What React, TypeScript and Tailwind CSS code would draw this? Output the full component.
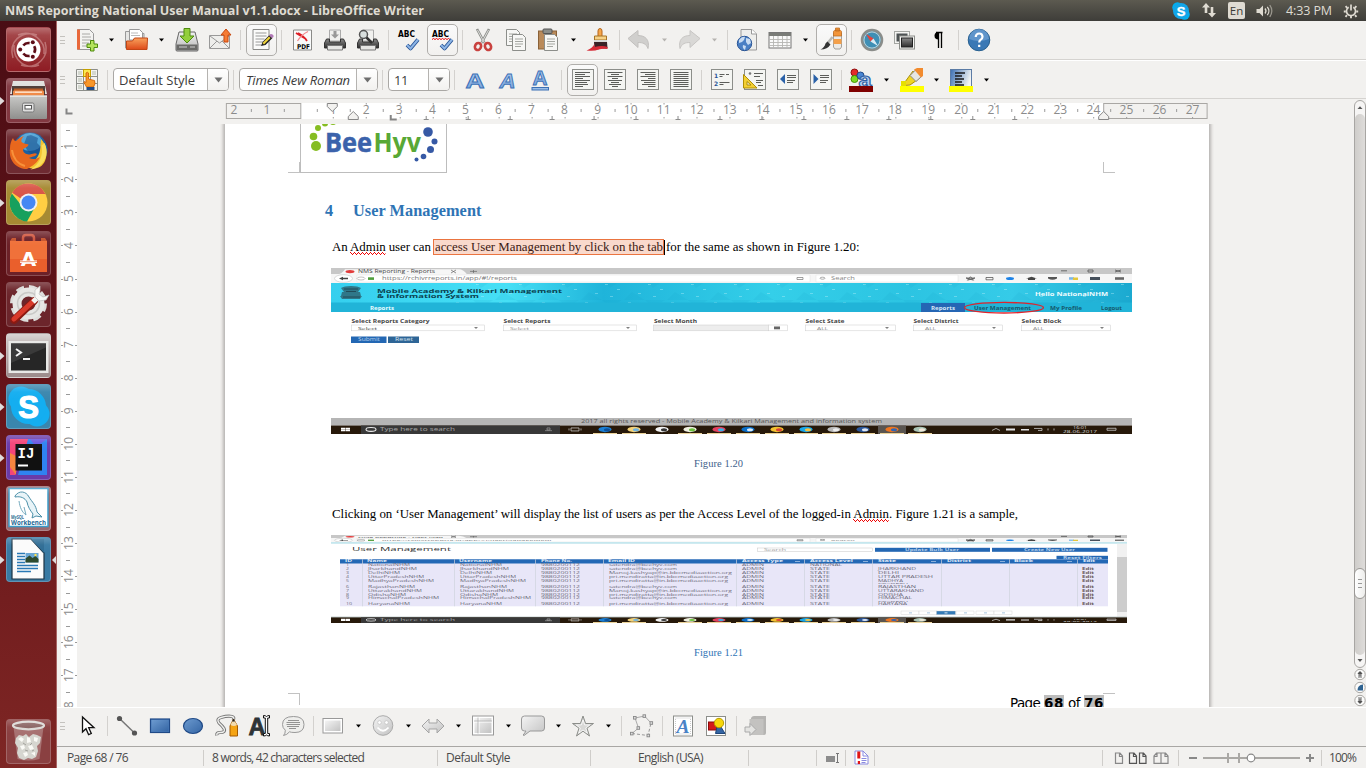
import { useLayoutEffect, useRef } from "react";
import type { ReactNode } from "react";

const UI = "font-['Open_Sans','Noto_Sans',sans-serif]";
const SERIF = "font-['Liberation_Serif',serif]";

/* Text whose tracking is adjusted so that it occupies a given width. */
function Fit({ w, className = "", children }: { w: number; className?: string; children: ReactNode }) {
  const ref = useRef<HTMLSpanElement>(null);
  useLayoutEffect(() => {
    const el = ref.current;
    if (!el) return;
    el.style.letterSpacing = "0px";
    const n = (el.textContent || "").length;
    const natural = el.getBoundingClientRect().width;
    el.style.letterSpacing = (w - natural) / n + "px";
  }, [w]);
  return (
    <span ref={ref} className={"inline-block whitespace-pre " + className}>
      {children}
    </span>
  );
}

function I({ m = "", children }: { m?: string; children: ReactNode }) {
  return (
    <svg className={"h-6 w-6 shrink-0 overflow-visible " + m} viewBox="0 0 24 24" fill="none">
      {children}
    </svg>
  );
}
const Sep = ({ m }: { m: string }) => <div className={"h-5 w-px shrink-0 bg-[#d3d1ce] " + m} />;
const Grip = () => (
  <div className="ml-[3px] flex w-[5px] shrink-0 flex-col gap-[2.5px]">
    <div className="h-px bg-[#c4c2be]" />
    <div className="h-px bg-[#c4c2be]" />
    <div className="h-px bg-[#c4c2be]" />
  </div>
);
const Arrow = ({ m, off }: { m: string; off?: boolean }) => (
  <svg className={"h-[4px] w-[7px] shrink-0 " + m} viewBox="0 0 7 4">
    <path d="M1 0.5h5L3.5 3.5z" fill={off ? "#b5b3b0" : "#000"} />
  </svg>
);
const Frame = ({ m, children }: { m: string; children: ReactNode }) => (
  <div
    className={
      "flex h-8 w-[31px] shrink-0 items-center justify-center rounded-[5px] border border-[#b0aeab] bg-gradient-to-b from-[#fafafa] to-[#f2f1ef] " +
      m
    }
  >
    {children}
  </div>
);

function Defs() {
  return (
    <svg className="absolute h-0 w-0">
      <defs>
        <linearGradient id="or" x1="0" y1="0" x2="0" y2="1">
          <stop offset="0" stopColor="#f9a25c" />
          <stop offset="1" stopColor="#dd4a1a" />
        </linearGradient>
        <linearGradient id="gr" x1="0" y1="0" x2="0" y2="1">
          <stop offset="0" stopColor="#f2f2f2" />
          <stop offset="1" stopColor="#b4b4b4" />
        </linearGradient>
        <linearGradient id="cab" x1="0" y1="0" x2="0" y2="1">
          <stop offset="0" stopColor="#c9c9c7" />
          <stop offset="1" stopColor="#8f8f8d" />
        </linearGradient>
        <linearGradient id="dk" x1="0" y1="0" x2="0" y2="1">
          <stop offset="0" stopColor="#8a8a8a" />
          <stop offset="1" stopColor="#2c2c2c" />
        </linearGradient>
        <linearGradient id="bl" x1="0" y1="0" x2="0" y2="1">
          <stop offset="0" stopColor="#b5cfee" />
          <stop offset="1" stopColor="#74a1db" />
        </linearGradient>
        <linearGradient id="db" x1="0" y1="0" x2="1" y2="1">
          <stop offset="0" stopColor="#6d9bd0" />
          <stop offset="1" stopColor="#3465a4" />
        </linearGradient>
        <linearGradient id="bw" x1="0" y1="0" x2="1" y2="0.3">
          <stop offset="0" stopColor="#3b6fb3" />
          <stop offset="1" stopColor="#f2f4f2" />
        </linearGradient>
        <linearGradient id="lg" x1="0" y1="0" x2="1" y2="1">
          <stop offset="0" stopColor="#f4f4f4" />
          <stop offset="1" stopColor="#c2c2c2" />
        </linearGradient>
        <linearGradient id="ban" x1="0" y1="0" x2="1" y2="0">
          <stop offset="0" stopColor="#35cfee" />
          <stop offset="0.22" stopColor="#46dff5" />
          <stop offset="0.34" stopColor="#1fb4da" />
          <stop offset="0.55" stopColor="#34cfe9" />
          <stop offset="0.72" stopColor="#2cc4e2" />
          <stop offset="0.85" stopColor="#35cbe8" />
          <stop offset="1" stopColor="#1ba9d0" />
        </linearGradient>
        <pattern id="dots" width="43" height="20" patternUnits="userSpaceOnUse">
          <rect x="3" y="4" width="3" height="0.8" fill="#c6f5fb" opacity="0.5" />
          <rect x="15" y="9" width="3" height="0.8" fill="#c6f5fb" opacity="0.5" />
          <rect x="26" y="2" width="3" height="0.8" fill="#c6f5fb" opacity="0.5" />
          <rect x="36" y="13" width="3" height="0.8" fill="#c6f5fb" opacity="0.45" />
          <rect x="8" y="16" width="3" height="0.8" fill="#c6f5fb" opacity="0.45" />
          <path d="M0 0L20 0 8 8zM30 12l13 8H22z" fill="#0f9cc8" opacity="0.12" />
        </pattern>
        <pattern id="zig" width="4" height="3" patternUnits="userSpaceOnUse">
          <path d="M0 0.500h1M1 1.500h1M2 2.500h1M3 1.500h1" stroke="#f00000" />
        </pattern>
        <linearGradient id="gloss" x1="0" y1="0" x2="0" y2="1">
          <stop offset="0" stopColor="#fff" stopOpacity="0.350" />
          <stop offset="0.5" stopColor="#fff" stopOpacity="0.05" />
          <stop offset="1" stopColor="#fff" stopOpacity="0" />
        </linearGradient>
      </defs>
    </svg>
  );
}

/* ---------- top panel ---------- */
function Panel() {
  return (
    <header className={"flex h-[21px] w-full shrink-0 items-center bg-gradient-to-b from-[#5c5a50] to-[#3e3d39] text-[#dfdbd2] " + UI}>
      <Fit w={419} className="ml-[5px] text-[12.5px] leading-5 font-bold">
        NMS Reporting National User Manual v1.1.docx - LibreOffice Writer
      </Fit>
      <svg className="ml-auto h-[18px] w-[18px]" viewBox="0 0 18 18">
        <circle cx="5.5" cy="5.5" r="5.2" fill="#00aff0" />
        <circle cx="12.5" cy="12.5" r="5.2" fill="#00aff0" />
        <circle cx="9" cy="9" r="8" fill="#12a5e8" />
        <text x="9" y="13.6" fontSize="13" fontWeight="700" fontFamily="Liberation Sans" fill="#fff" stroke="#fff" strokeWidth="0.400" textAnchor="middle">S</text>
      </svg>
      <svg className="ml-[11px] h-[15px] w-[16px]" viewBox="0 0 16 15" fill="#dfdbd2">
        <path d="M5 0l4 4.500H6.300V10H3.700V4.500H1zM11 14.500l-4-4.500h2.700V4h2.600v6H15z" />
      </svg>
      <span className="ml-[11px] flex h-[17px] w-[17px] items-center justify-center rounded-[2px] bg-[#dfdbd2] text-[11.5px] leading-4 text-[#3c3b37]">En</span>
      <svg className="ml-[11px] h-[14px] w-[18px]" viewBox="0 0 18 14">
        <path d="M0.500 5h3l3.500-3.500v11L3.500 9h-3z" fill="#dfdbd2" />
        <path d="M9 4.500a4 4 0 010 5M11.300 2.800a6.500 6.500 0 010 8.400" stroke="#dfdbd2" strokeWidth="1.300" fill="none" />
        <path d="M13.700 1.200a9 9 0 010 11.600" stroke="#99968d" strokeWidth="1.300" fill="none" />
      </svg>
      <Fit w={46} className="ml-[12px] text-[12.5px] leading-5">4:33 PM</Fit>
      <svg className="mr-[7px] ml-[11px] h-[16px] w-[16px]" viewBox="0 0 16 16">
        <path d="M10.300 4.200a4.500 4.500 0 11-4.600 0" fill="none" stroke="#dfdbd2" strokeWidth="1.600" />
        <path d="M8 13v2.300M0.800 8.500h2M13.200 8.500h2M2.600 3.200l1.600 1.600M12 12.200l1.500 1.600M2.500 13.800L4 12.200M11.800 4.800l1.600-1.600" stroke="#dfdbd2" strokeWidth="1.900" />
        <path d="M8 1.500v6" stroke="#dfdbd2" strokeWidth="1.700" />
      </svg>
    </header>
  );
}

/* ---------- launcher ---------- */
function Tile({ bg, children, left, right, m = "mt-[6px]" }: { bg: string; children: ReactNode; left?: boolean; right?: boolean; m?: string }) {
  return (
    <div className={"flex h-[45px] w-full shrink-0 items-center " + m}>
      <svg className="h-[10px] w-[6px]" viewBox="0 0 6 10">
        {left && <path d="M0 1l4.500 4L0 9z" fill="#e0dcdc" />}
      </svg>
      <div className={"h-[45px] w-[45px] overflow-hidden rounded-[4px] border border-white/20 " + bg}>
        <svg className="h-[43px] w-[43px]" viewBox="1 1 43 43">
          {children}
          <rect x="1" y="1" width="43" height="14" fill="url(#gloss)" opacity="0.6" />
        </svg>
      </div>
      <svg className="h-[10px] w-[5px]" viewBox="0 0 5 10">
        {right && <path d="M5 1L1 5l4 4z" fill="#e0dcdc" />}
      </svg>
    </div>
  );
}

function Launcher() {
  return (
    <aside className="flex w-[57px] shrink-0 flex-col border-r border-[#a76463] bg-gradient-to-b from-[#4a0d14] via-[#661419] to-[#7e2624]">
      <Tile bg="bg-gradient-to-b from-[#a5474a] to-[#8e1c24]">
        <path d="M7 31C2 15 15 3 31 8M39 15c5 15-8 28-24 23M12 8c14-6 28 6 26 19M33 38C20 43 7 34 8 18" stroke="#d49a9a" strokeWidth="1.500" fill="none" opacity="0.6" />
        <circle cx="22.500" cy="22.500" r="12" fill="#fff" />
        <g fill="none" stroke="#5e0d17" strokeWidth="2.600">
          <path d="M17.300 18.500a6.500 6.500 0 016.300-2.400" />
          <path d="M17.300 26.500a6.500 6.500 0 006.300 2.400" />
          <path d="M28.200 19.200a6.500 6.500 0 010 6.600" />
        </g>
        <circle cx="14.200" cy="22.500" r="2" fill="#5e0d17" />
        <circle cx="26.800" cy="15.200" r="2" fill="#5e0d17" />
        <circle cx="26.800" cy="29.800" r="2" fill="#5e0d17" />
      </Tile>
      <Tile left bg="bg-[#823841]">
        <path d="M7 3h31l3 13H4z" fill="#dededc" />
        <rect x="6" y="8" width="33" height="11" fill="#4b3a35" />
        <rect x="8" y="10.500" width="29" height="3" fill="#b85a26" />
        <rect x="7" y="12.500" width="31" height="6" rx="1" fill="#f08b49" />
        <rect x="9" y="13.500" width="27" height="1.300" fill="#fff0df" />
        <path d="M4 17.500h37v22.500a1 1 0 01-1 1H5a1 1 0 01-1-1z" fill="url(#cab)" />
        <path d="M4 17.500h37v1.500H4z" fill="#e4e4e2" />
        <rect x="16.500" y="25" width="11.500" height="9" rx="1.500" fill="#ddd" stroke="#777" />
        <rect x="19" y="27.500" width="6.500" height="3.500" fill="#fff" stroke="#555" />
      </Tile>
      <Tile bg="bg-[#6e2a31]">
        <circle cx="24" cy="21" r="17.500" fill="#1c5f9f" />
        <ellipse cx="24" cy="13" rx="12" ry="9" fill="#5db4e4" opacity="0.800" />
        <path d="M21 7l4-1 7 3-1 5 4 4-3 7-6 1-5-5-3-6z" fill="#174a86" opacity="0.550" />
        <path d="M35 10c-1 9 0 14-5 20-3 4-8 6-13 5 7 7 18 6 22-3 3-7 2-16-4-22z" fill="#f4c430" />
        <path d="M38.500 14c4 8 2 17-4 22-3 2.500-6 4-10 4.500 9-5 13-14 11-24z" fill="#f9dd5c" />
        <path d="M4 19c0-4 1-7 3-10 .5 2 1.500 3 3 3 2-2 4-4 8-5-2 2-3 4-2.500 6 2 2 5 1.500 7 2.500 0 2.500-4 3-5.500 5 0 4 4 5 7 5 3-.5 5-2 7-.500-2 3-5 2.500-8 4 4 2 8 1 11-1-2 5-7 9-13 12C11 40 2 32 4 19z" fill="#e8671d" />
        <path d="M6 21c1 8 6 14 13 16" stroke="#f8913a" strokeWidth="2" fill="none" />
      </Tile>
      <Tile left bg="bg-[#a68a33]">
        <circle cx="22.500" cy="22.500" r="19" fill="#ffce43" />
        <path d="M22.500 3.500A19 19 0 0139.500 14H22.500L14 18 6.200 12.700A19 19 0 0122.500 3.500z" fill="#d95648" />
        <path d="M5.800 13.500A19 19 0 0021 41.400L29 27l-13-1z" fill="#17a05d" />
        <circle cx="22.500" cy="22.500" r="9" fill="#f1f1f1" />
        <circle cx="22.500" cy="22.500" r="7" fill="#4587f3" />
      </Tile>
      <Tile bg="bg-[#6c2128]">
        <path d="M17 12V7q0-3 3-3h5q3 0 3 3v5" fill="none" stroke="#d0543c" strokeWidth="2.500" />
        <path d="M4 10h37v31H4z" fill="#f0713a" />
        <path d="M4 10l2-3h4v3M35 7h4l2 3h-6z" fill="#c7542d" />
        <path d="M4 28h37v13H4z" fill="#ea5f2c" />
        <text x="22.500" y="34.500" fontSize="20" fontWeight="700" fontFamily="DejaVu Sans" fill="#fff" textAnchor="middle">A</text>
        <path d="M14 30.700h17" stroke="#fff" strokeWidth="2.600" />
        <path d="M14 30.700h17" stroke="#ea6531" strokeWidth="0.700" />
      </Tile>
      <Tile bg="bg-[#6c252b]">
        <circle cx="22.500" cy="21.500" r="15.500" fill="none" stroke="#dcdcda" strokeWidth="6" strokeDasharray="7.500 4.670" />
        <circle cx="22.500" cy="21.500" r="11.500" fill="none" stroke="#e6e6e4" strokeWidth="9" />
        <circle cx="22.500" cy="21.500" r="11" fill="none" stroke="#c9c9c7" strokeWidth="1.500" />
        <path d="M28 19L8 38" stroke="#8b1a12" strokeWidth="7.500" strokeLinecap="round" />
        <path d="M28 18.500L8 37" stroke="#d83a2b" strokeWidth="5" strokeLinecap="round" />
        <path d="M27 20l5-5" stroke="#f4f4f2" strokeWidth="5" />
        <path d="M34 4l-5 4v7l4 4 7-1 3-5-6 2-4-3 1-3z" fill="#f7f7f5" stroke="#bbb" strokeWidth="0.700" />
      </Tile>
      <Tile left bg="bg-gradient-to-b from-[#cfc9c8] to-[#9c8b8b]">
        <rect x="2.500" y="8" width="40" height="32" fill="#e8e8e6" />
        <rect x="5" y="10.500" width="35" height="27" fill="#262626" />
        <path d="M5 10.500h35v4L5 30z" fill="#3a3a3a" />
        <path d="M10 16l5 3.500-5 3.500M17 26h7" stroke="#f2f2f2" strokeWidth="2" fill="none" />
      </Tile>
      <Tile left bg="bg-[#3a86ad]">
        <circle cx="15" cy="15" r="12.500" fill="#14aef0" />
        <circle cx="31" cy="30" r="12.500" fill="#14aef0" />
        <circle cx="22.500" cy="22.500" r="17.500" fill="#14aef0" />
        <text x="22.500" y="33.500" fontSize="31" fontWeight="700" fontFamily="Liberation Sans" fill="#fff" stroke="#fff" strokeWidth="1.200" textAnchor="middle">S</text>
      </Tile>
      <Tile left bg="bg-[#6a3aa8]">
        <path d="M4 4h20L9 40H4z" fill="#f4457a" />
        <path d="M4 18l6 3v19l-6-8z" fill="#f5853f" />
        <path d="M22 4h19v36H12z" fill="#2f82f0" />
        <path d="M24 4h17L30 12z" fill="#6b57e0" />
        <rect x="9.500" y="9" width="26.500" height="26.500" fill="#111" />
        <text x="11.500" y="23" fontSize="14" fontWeight="700" fontFamily="Liberation Mono" fill="#fff">IJ</text>
        <path d="M12 30.500h10" stroke="#fff" strokeWidth="2" />
      </Tile>
      <Tile bg="bg-[#9a6a70]">
        <rect x="3" y="2.500" width="39" height="38" fill="#fff" stroke="#3b9cc9" strokeWidth="1.500" />
        <path d="M9 10c4-6 11-5 14 1 3 5 7 8 8 15l5 5-6-1-4 2 1-4c-3-4-5-7-6-12-2-4-6-6-12-5z" fill="#e8f4f8" stroke="#4b8fa8" strokeWidth="1" />
        <path d="M13 15c1 7 3 11 7 14l-2-8" fill="none" stroke="#73a9bd" strokeWidth="1" />
        <text x="5" y="32.500" fontSize="4.500" fontFamily="Open Sans" fontWeight="700" fill="#2f6f93" textLength="13" lengthAdjust="spacingAndGlyphs">MySQL</text>
        <text x="5" y="38.500" fontSize="7" fontFamily="Open Sans" fontWeight="700" fill="#1f6a96" textLength="35" lengthAdjust="spacingAndGlyphs">Workbench</text>
      </Tile>
      <Tile left right bg="bg-[#397aa3]">
        <path d="M6 2h19l13 14v26H6z" fill="#fbfbfb" stroke="#1c3344" strokeWidth="1.200" />
        <path d="M25 2h13v14z" fill="#2e6c94" />
        <path d="M11 16.500h8M11 19.500h8M11 22.500h8M11 25.500h8M11 28.500h21M11 31.500h21M11 34.500h14" stroke="#2a79b5" strokeWidth="1.400" />
        <rect x="19.500" y="16" width="13" height="9.500" fill="#69a6d4" />
        <path d="M19.500 25.500v-4l4-3 3 2.500 3-2 3 3v3.500z" fill="#2d4a2d" />
        <circle cx="29.500" cy="18" r="1.200" fill="#ffe14d" />
      </Tile>
      <Tile m="mt-auto mb-[4px]" bg="bg-[#8a4041]">
        <path d="M7.500 8l4 32q11 3 22 0l4-32z" fill="#c9aeac" opacity="0.450" />
        <path d="M10 19l3-3 4 1 3-2 3 3 4-3 4 1 4 2-1 6-3 3 1 5-2 6-4 2-4-1-4 2-5-2-2-5 1-5-3-5z" fill="#d6d6d0" />
        <path d="M12 20l3-2 3 2-2 3zM21 18l3 1 1 4-4 1zM28 18l4 1-1 4-3-1zM14 27l4-1 1 3-3 2zM22 27l4-1 2 4-4 1zM17 34l4-1 1 3-3 2zM25 34l4-1v4z" fill="#fafaf6" />
        <path d="M17 24l3 2M26 24l-2 2M19 31l3 1M28 31l-2 1" stroke="#a3a39d" />
        <ellipse cx="22.500" cy="6.500" rx="15.500" ry="3.800" fill="#8a6463" stroke="#dcd9d6" strokeWidth="2.200" />
      </Tile>
    </aside>
  );
}

/* ---------- toolbars ---------- */
const PageShape = ({ x = 0, y = 0 }: { x?: number; y?: number }) => (
  <g transform={`translate(${x} ${y})`}>
    <path d="M0.500 0.500h10l3 3v13h-13z" fill="#f7f7f5" stroke="#8c8e8a" />
    <path d="M3 5h8M3 7.500h8M3 10h8M3 12.500h6" stroke="#9b9d99" strokeWidth="0.900" />
  </g>
);
const Abc = ({ m = "", wavy }: { m?: string; wavy?: boolean }) => (
  <I m={m}>
    <text x="1" y="9" fontSize="8" fontWeight="700" fontFamily="DejaVu Sans" fill="#000" textLength="17" lengthAdjust="spacingAndGlyphs">ABC</text>
    {wavy && <path d="M1 11.500l1.500-1 1.500 1 1.500-1 1.500 1 1.500-1 1.500 1 1.500-1 1.500 1 1.500-1 1.500 1 1.500-1 1.500 1" stroke="#e00" strokeWidth="1" />}
    <path d="M10 17l3.500 3.500L21 11.500" stroke="#2a5596" strokeWidth="3.800" strokeLinejoin="round" />
    <path d="M10 17l3.500 3.500L21 11.500" stroke="#8db5e6" strokeWidth="2" />
  </I>
);

function StandardBar() {
  return (
    <div className="flex h-[39px] shrink-0 items-center border-b border-[#d5d3d0]">
      <Grip />
      <I m="ml-[10px]">
        <path d="M2.500 1.500h12l4 4v16h-16z" fill="#f3f3f1" stroke="#999" />
        <path d="M2 1.500h3v20H2z" fill="#e8683a" />
        <path d="M7 6h8M7 9h9M7 12h9M7 15h7M7 18h5" stroke="#a9a9a6" />
        <path d="M15.500 12.500h3.500v3.500h3.500v3.500H19V23h-3.500v-3.500H12V16h3.500z" fill="#b4e35c" stroke="#4e8a0e" />
      </I>
      <Arrow m="ml-[9px]" />
      <I m="ml-[9px]">
        <path d="M1.500 20V3.500h5l1.500 2h12V20z" fill="#e6e6e4" stroke="#999" />
        <path d="M5.500 1.500h10l3 3V12h-13z" fill="#fff" stroke="#999" />
        <path d="M7 5h7M7 7.500h9" stroke="#bbb" />
        <path d="M2.500 13h6l2-3h13L23 21.500H2.500z" fill="url(#or)" stroke="#c24616" />
      </I>
      <Arrow m="ml-[10px]" />
      <I m="ml-[10px]">
        <path d="M4 4h16l3 12v6q0 1-1 1H2q-1 0-1-1v-6z" fill="url(#gr)" stroke="#666" />
        <path d="M1.500 16.500h21V22h-21z" fill="#6a6a68" />
        <path d="M4 19h8M15 19h5" stroke="#ccc" />
        <path d="M9 .500h6V8h4l-7 7-7-7h4z" fill="#93cf3c" stroke="#4e8a0e" />
      </I>
      <I m="ml-[9px]">
        <path d="M1.500 7.500h20v13h-20z" fill="#eeeeec" stroke="#999" />
        <path d="M2 8l9.500 7L21 8M2 20l7-7M21 20l-7-7" stroke="#999" />
        <path d="M16 14V7h-3l5-6 5 6h-3v7z" fill="#f57b34" stroke="#c9480f" />
      </I>
      <Sep m="ml-2" />
      <Frame m="ml-[5px]">
        <I>
          <path d="M3 1.500h16v20H3z" fill="#fbfbfa" stroke="#8a8a88" />
          <path d="M5.500 5h11M5.500 8h11M5.500 11h9M5.500 14h8M5.500 17h6" stroke="#999" />
          <path d="M11 18l1.500-4 7-7 3 3-7 7z" fill="#222" />
          <path d="M12.500 15l6.500-6.500 1.500 1.500-6.500 6.500z" fill="#f1d53c" />
          <path d="M19 7.500l1.500-1.500q2-.5 3 1.500v1.500L22 10z" fill="#b27ab8" />
        </I>
      </Frame>
      <Sep m="ml-1" />
      <I m="ml-2">
        <path d="M3.500 2h18v20h-18z" fill="#fafafa" stroke="#8a8a88" />
        <path d="M6 5l10 6M8 5q6 3 9 8" stroke="#dd1f26" strokeWidth="1.800" />
        <path d="M18 3.500Q11 7 7.500 13" stroke="#f0888c" strokeWidth="1.200" />
        <text x="7" y="20.500" fontSize="6.500" fontFamily="DejaVu Sans" fontWeight="700" fill="#000" textLength="13" lengthAdjust="spacingAndGlyphs">PDF</text>
      </I>
      <I m="ml-[9px]">
        <path d="M6.500 2h11v11h-11z" fill="#f1f1ef" stroke="#aaa" />
        <path d="M10.500 3h3v3.500H16l-4 4-4-4h2.500z" fill="#999" />
        <path d="M3.500 11h3v3h11v-3h3l2 4v5h-21v-5z" fill="url(#dk)" stroke="#333" />
        <path d="M4.500 17.500h15v4.500h-15z" fill="#e6e6e4" stroke="#777" />
      </I>
      <I m="ml-[9px]">
        <path d="M6.500 2h11v11h-11z" fill="#f1f1ef" stroke="#aaa" />
        <path d="M3.500 11h3v3h11v-3h3l2 4v5h-21v-5z" fill="url(#dk)" stroke="#333" />
        <path d="M4.500 17.500h15v4.500h-15z" fill="#e6e6e4" stroke="#777" />
        <circle cx="7.500" cy="6.500" r="4" fill="#d8dedd" stroke="#555" strokeWidth="1.500" />
        <path d="M10.500 9.500l5.500 5.500" stroke="#333" strokeWidth="2.500" />
      </I>
      <Sep m="ml-2" />
      <Abc m="ml-2" />
      <Frame m="ml-[6px]">
        <Abc wavy />
      </Frame>
      <Sep m="ml-1" />
      <I m="ml-2">
        <path d="M6 1l7.500 14M18 1l-7.500 14" stroke="#8c8e8a" strokeWidth="2.600" />
        <path d="M6.500 2l7 13M17.500 2l-7 13" stroke="#dcdcda" />
        <ellipse cx="7" cy="18.500" rx="3" ry="3.600" stroke="#c9423f" strokeWidth="2.600" transform="rotate(25 7 18.500)" />
        <ellipse cx="17" cy="18.500" rx="3" ry="3.600" stroke="#c9423f" strokeWidth="2.600" transform="rotate(-25 17 18.500)" />
      </I>
      <I m="ml-[9px]">
        <PageShape x={2} y={1} />
        <PageShape x={8} y={6} />
      </I>
      <I m="ml-2">
        <rect x="2.500" y="3" width="18" height="18" fill="#b98a5a" stroke="#8a6238" />
        <rect x="7" y="1" width="9" height="4.500" rx="1" fill="#8c8e8a" stroke="#555" />
        <PageShape x={8} y={6} />
      </I>
      <Arrow m="ml-[10px]" />
      <I m="ml-[11px]">
        <path d="M10 8V3q0-2.500 2-2.500T14 3v5" fill="#f5a64a" stroke="#b5651a" />
        <path d="M6.500 8h12v4h-12z" fill="#f6d288" stroke="#a67426" />
        <path d="M6 12h13v2.500H6z" fill="#d8d8d6" />
        <path d="M6 14h13l.5 6q-2 1-6 0-3 2-7 1.500z" fill="#3a2226" />
        <path d="M6.500 16q-2 4-8 6.500 8 1 12-1 4-1 9-.5v-2q-5-2-13 0z" fill="#d62a36" />
      </I>
      <Sep m="ml-[7px]" />
      <I m="ml-[7px]">
        <path d="M1 10.500l10-8v5c7 0 12 4 10 13-2-5-5-6-10-6v5z" fill="#d0cfcd" stroke="#c2c0be" />
      </I>
      <Arrow m="ml-[10px]" off />
      <I m="ml-[9px]">
        <path d="M23 10.500l-10-8v5c-7 0-12 4-10 13 2-5 5-6 10-6v5z" fill="#d9d8d6" stroke="#c8c6c4" />
      </I>
      <Arrow m="ml-[10px]" off />
      <Sep m="ml-[9px]" />
      <I m="ml-2">
        <path d="M5 1.500h11l4.500 4.500v16H5z" fill="#eeeeec" stroke="#999" />
        <path d="M15.500 1.500V6H20.500" fill="#fff" stroke="#999" />
        <circle cx="8.500" cy="15.500" r="7.200" fill="#4a7fc4" stroke="#2a5596" />
        <path d="M3 12q3-4 6-3l-1 3-2 2-3 1zM10 10l4 1 1 4-3 2-2-3zM7 17l3 1-1 4q-3-2-2-5z" fill="#c9dcf2" />
      </I>
      <I m="ml-2">
        <rect x="1" y="4.500" width="22" height="15.500" fill="#fafafa" stroke="#777" />
        <path d="M1 5h22v3H1z" fill="#7a7c78" />
        <path d="M1 11.500h22M1 14.500h22M1 17.500h22M5.500 8v12M10 8v12M14.500 8v12M19 8v12" stroke="#b5b5b2" strokeWidth="0.900" />
      </I>
      <Arrow m="ml-[10px]" />
      <Frame m="ml-[7px]">
        <I>
          <path d="M13.500 5h8v14l-1.500 2h-5l-1.500-2z" fill="#eceae6" stroke="#a3a19d" />
          <path d="M13.500 3.500q0-1.500 4-1.500t4 1.500V8h-8zM15.500 0h4v3h-4z" fill="#f2953a" stroke="#b8661a" strokeWidth="0.700" />
          <path d="M13.500 11h8v5h-8z" fill="#f4a04a" />
          <path d="M12.500 9L7 16" stroke="#b8b8b4" strokeWidth="2.500" />
          <path d="M7.500 13.500l3 3q-3 5-10 5 4-2 5-6z" fill="#333" />
        </I>
      </Frame>
      <Sep m="ml-1" />
      <I m="ml-2">
        <circle cx="12" cy="12" r="10" fill="#5aa7c7" stroke="#8b8d8a" strokeWidth="2.500" />
        <circle cx="12" cy="12" r="8" fill="#3f8fb5" stroke="#e4e4e2" strokeWidth="0.700" />
        <path d="M6 6l7.500 4.500-3 3z" fill="#e9423a" />
        <path d="M18 18l-7.500-4.500 3-3z" fill="#d9ecf4" />
      </I>
      <I m="ml-[9px]">
        <rect x="1.500" y="3.500" width="15" height="12" fill="#f4f4f2" stroke="#a4a6a2" />
        <rect x="3.500" y="5.500" width="11" height="8" fill="#4e5354" />
        <rect x="6.500" y="8" width="15" height="13" fill="#f4f4f2" stroke="#8c8e8a" />
        <rect x="8.500" y="10" width="11" height="9" fill="url(#dk)" stroke="#222" />
      </I>
      <I m="ml-[9px]">
        <path d="M10 4.500h6.500M12.500 4.500V20M15.500 4.500V20" stroke="#000" strokeWidth="1.300" />
        <path d="M12.500 4q-4 0-4 3.800t4 3.800z" fill="#000" />
      </I>
      <Sep m="ml-2" />
      <I m="ml-2">
        <circle cx="12" cy="12" r="10.800" fill="#3a78b5" stroke="#28608f" />
        <path d="M2 11a10 10 0 0120 0q-10 4-20 0z" fill="#79a9da" opacity="0.600" />
        <path d="M8.700 9q.3-3.500 3.500-3.500T15.500 8.700q0 2-2 3.200-1.300.9-1.300 2.600M12.200 16.700v2.300" stroke="#fff" strokeWidth="2.200" fill="none" />
      </I>
    </div>
  );
}

function Combo({ box, text, tw, italic, m }: { box: string; text: string; tw: number; italic?: boolean; m: string }) {
  return (
    <div className={"flex h-[23px] shrink-0 overflow-hidden rounded-[4px] border border-[#aaa8a5] bg-white " + m + " " + box}>
      <div className={"flex flex-1 items-center pl-[5px] text-[#3c3c3c] " + UI}>
        <Fit w={tw} className={"text-[13px] leading-5 " + (italic ? "pl-px italic" : "")}>{text}</Fit>
      </div>
      <div className="flex w-[21px] items-center justify-center border-l border-[#b5b3b0] bg-gradient-to-b from-white to-[#f2f1ef]">
        <svg className="h-[6px] w-[9px]" viewBox="0 0 9 6"><path d="M0.500 0.500h8L4.500 5.500z" fill="#6e6e6e" /></svg>
      </div>
    </div>
  );
}

const BoxA = ({ d }: { d: string }) => (
  <>
    <rect x="1.500" y="1.500" width="21" height="20" fill="#f4f5f2" stroke="#8c8e8a" />
    <path d={d} stroke="#5c5e5a" strokeWidth="1" />
  </>
);

function FormatBar() {
  return (
    <div className="flex h-[39px] shrink-0 items-center border-t border-b border-t-white border-b-[#d5d3d0]">
      <Grip />
      <I m="ml-[10px]">
        <path d="M1.500 1.500h21v21h-21zM8.500 1.500v21M15.500 1.500v21M1.500 8.500h21M1.500 15.500h21" fill="#f3f3f0" stroke="#8c8e8a" />
        <path d="M3 3h4v4H3zM17 3h4v4h-4zM3 10h4v4H3zM3 17h4v4H3z" fill="#d3d7cf" />
        <rect x="8.500" y="1.500" width="7" height="7" fill="#fce94f" stroke="#c4a000" />
        <path d="M11 5q1.500-1.500 2.500 0v6l6 1.500q1.500 3-1 6.500h-7L9 14.500q0-2 2 0z" fill="#f8972a" stroke="#cc5c00" strokeWidth="0.800" />
        <path d="M11.500 19h8v3h-8z" fill="#204a87" />
      </I>
      <Sep m="ml-2" />
      <Combo m="ml-[5px]" box="w-[116px]" text="Default Style" tw={76} />
      <Sep m="ml-1" />
      <Combo m="ml-[5px]" box="w-[139px]" text="Times New Roman" tw={105} italic />
      <Sep m="ml-1" />
      <Combo m="ml-[5px]" box="w-[62px]" text="11" tw={14} />
      <Sep m="ml-1" />
      <I m="ml-2">
        <text x="2.500" y="19.500" fontSize="21" fontWeight="700" fontFamily="Liberation Sans" fill="url(#bl)" stroke="#3b70b5" strokeWidth="0.900" textLength="19" lengthAdjust="spacingAndGlyphs">A</text>
      </I>
      <I m="ml-[9px]">
        <text x="3.500" y="19.500" fontSize="21" fontWeight="700" fontStyle="italic" fontFamily="Liberation Sans" fill="url(#bl)" stroke="#3b70b5" strokeWidth="0.900" textLength="16" lengthAdjust="spacingAndGlyphs">A</text>
      </I>
      <I m="ml-2">
        <text x="4.500" y="16.500" fontSize="20" fontWeight="700" fontFamily="Liberation Sans" fill="url(#bl)" stroke="#3b70b5" strokeWidth="0.900" textLength="15" lengthAdjust="spacingAndGlyphs">A</text>
        <rect x="4" y="19.500" width="16.500" height="2.500" fill="#9dbfe8" stroke="#3b70b5" />
      </I>
      <Sep m="ml-[9px]" />
      <Frame m="ml-[5px]">
        <I><BoxA d="M4 4.500h15M4 6.500h10M4 8.500h15M4 10.500h8M4 12.500h15M4 14.500h12M4 16.500h13M4 18.500h8" /></I>
      </Frame>
      <I m="ml-[5px]"><BoxA d="M4.500 4.500h15M8 6.500h8M4.500 8.500h15M9 10.500h6M5 12.500h14M8 14.500h8M6 16.500h12M9 18.500h6" /></I>
      <I m="ml-[9px]"><BoxA d="M4.500 4.500h15M9 6.500h10.500M4.500 8.500h15M12 10.500h7.500M5 12.500h14.500M8 14.500h11.500M6 16.500h13.500M12 18.500h7.500" /></I>
      <I m="ml-[9px]"><BoxA d="M4.500 4.500h15M4.500 6.500h15M4.500 8.500h15M4.500 10.500h15M4.500 12.500h15M4.500 14.500h15M4.500 16.500h15M4.500 18.500h15" /></I>
      <Sep m="ml-2" />
      <I m="ml-2">
        <BoxA d="M9.500 6.500h5M16 6.500h3M9.500 8.500h3M9.500 14.500h10M9.500 16.500h4" />
        <text x="4" y="9.500" fontSize="6" fontWeight="700" fontFamily="DejaVu Sans" fill="#2a5596">1</text>
        <text x="4" y="17.500" fontSize="6" fontWeight="700" fontFamily="DejaVu Sans" fill="#2a5596">2</text>
      </I>
      <I m="ml-[9px]">
        <BoxA d="M11 5.500h9M11 8.500h6M13 12.500h7M13 14.500h5M15 17.500h5" />
        <circle cx="7" cy="5.500" r="1.300" fill="#777" />
        <path d="M0.500 6.500v13.500H14z" fill="#f3cf33" stroke="#b08e05" />
        <path d="M4 13.500v3.500h4z" fill="#f4f5f2" stroke="#b08e05" />
      </I>
      <I m="ml-[9px]">
        <BoxA d="M11 7.500h9M11 9.500h9M11 12.500h8M11 14.500h6" />
        <path d="M9 6v10l-5-5z" fill="#2a62a8" />
      </I>
      <I m="ml-[9px]">
        <BoxA d="M11 7.500h9M11 9.500h9M11 12.500h8M11 14.500h6" />
        <path d="M4.500 6v10l5-5z" fill="#2a62a8" />
      </I>
      <Sep m="ml-2" />
      <I m="ml-[7px]">
        <circle cx="5.500" cy="4.500" r="3.500" fill="#e22b2b" stroke="#8f0e0e" />
        <circle cx="5.500" cy="11" r="3.500" fill="#7ddb22" stroke="#459207" />
        <circle cx="11.500" cy="7.500" r="3.500" fill="#4a86d4" stroke="#204a87" />
        <text x="9.500" y="18.500" fontSize="20" fontWeight="700" fontFamily="Liberation Sans" fill="#b6d0f0" stroke="#2f5fa5" strokeWidth="1.100" textLength="13" lengthAdjust="spacingAndGlyphs">a</text>
        <rect x="0" y="18" width="24" height="6" fill="#800000" />
      </I>
      <Arrow m="ml-[10px]" />
      <I m="ml-[10px]">
        <path d="M5 14L13 3l7 7-10 7-6 .500z" fill="#f0d524" stroke="#ad9204" />
        <path d="M10 7.500L16 1.500l6.500 6-6.500 6z" fill="#e6e6e4" stroke="#888" />
        <path d="M14 1.500L17 0h6v8l-2 1.500z" fill="#f28b2e" />
        <path d="M1 13h5v5H1z" fill="#e6e000" />
        <rect x="0" y="18" width="24" height="6" fill="#ffff00" />
      </I>
      <Arrow m="ml-[9px]" />
      <I m="ml-[9px]">
        <rect x="1.500" y="1.500" width="21" height="19" fill="url(#bw)" stroke="#5b7ba5" />
        <path d="M6 5h10M6 8h7M6 11h9M6 14h7M6 17h9" stroke="#1a1a1a" strokeWidth="1.300" />
        <rect x="0" y="18" width="24" height="6" fill="#ffff00" />
      </I>
      <Arrow m="ml-[10px]" />
    </div>
  );
}

function DrawingBar() {
  return (
    <div className="flex h-[40px] shrink-0 items-center border-t border-b border-t-white border-b-[#a9a7a4] bg-[#f2f1ef] pb-[2px]">
      <Grip />
      <I m="ml-[10px]">
        <path d="M7.500 3v15l3.500-3.300 2.600 6 2.700-1.200-2.600-5.800H19z" fill="#fff" stroke="#111" strokeWidth="1.300" />
      </I>
      <Sep m="ml-2" />
      <I m="ml-[7px]">
        <path d="M4.500 4.500l15 14.500" stroke="#777" strokeWidth="1.500" />
        <circle cx="4.500" cy="4.500" r="2.600" fill="#555" /><circle cx="19.500" cy="19" r="2.600" fill="#555" />
      </I>
      <I m="ml-[9px]"><rect x="2.500" y="5" width="19" height="13.500" fill="#4a7dbd" stroke="#204a87" strokeWidth="1.200" /><rect x="3.500" y="6" width="17" height="11.500" fill="url(#db)" /></I>
      <I m="ml-[9px]"><ellipse cx="12" cy="12" rx="9.500" ry="7.500" fill="url(#db)" stroke="#204a87" strokeWidth="1.200" /></I>
      <I m="ml-[10px]">
        <path d="M2 21.500Q1 18.500 5 18.500q6 0 4-4Q7 11.500 4 9q-3-4 2-5.500 7-2 11-1 3 1 1 4" stroke="#777" strokeWidth="3.200" />
        <path d="M2 21.500Q1 18.500 5 18.500q6 0 4-4Q7 11.500 4 9q-3-4 2-5.500 7-2 11-1 3 1 1 4" stroke="#f1f1ef" strokeWidth="1.400" />
        <path d="M18.500 5l4 7v10h-7.500V12z" fill="#f5a414" stroke="#a35b02" />
        <path d="M18.500 5l3.500 6q-3 2-6.500 0z" fill="#f3dcb0" />
        <path d="M18.500 4.500l1.500 3h-3z" fill="#222" />
      </I>
      <I m="ml-[9px]">
        <text x="0.500" y="21" fontSize="24" fontWeight="700" fontFamily="Liberation Sans" fill="#2e3436" stroke="#2e3436" strokeWidth="0.800" textLength="17" lengthAdjust="spacingAndGlyphs">A</text>
        <path d="M15.500 1.500q2 0 3 1 1-1 3-1v2.500h-1.800v15.500h1.800V22q-2 0-3-1-1 1-3 1v-2.500h1.800V4h-1.800z" fill="#fff" stroke="#111" />
      </I>
      <I m="ml-[9px]">
        <path d="M12.500 2.500q10.500 0 10.500 8t-9 8q-4 0-5.500-.7Q6 21 2.500 21.500q2-2 1.800-5.300Q1.500 14 1.500 10.500q0-8 11-8z" fill="#eeeeec" stroke="#999" />
        <path d="M7 6.500h11M5.500 8.500h13.500M5.500 10.500h13.500M6 12.500h12M8 14.500h7" stroke="#888" strokeWidth="0.900" />
      </I>
      <Sep m="ml-2" />
      <I m="ml-[7px]"><rect x="2" y="4.500" width="19.500" height="14.500" fill="#fff" stroke="#999" /><rect x="4" y="6.500" width="15.500" height="10.500" fill="url(#lg)" /></I>
      <Arrow m="ml-[10px]" />
      <I m="ml-[9px]">
        <circle cx="12" cy="11.500" r="9.800" fill="url(#lg)" stroke="#aaa" />
        <circle cx="8.500" cy="8.500" r="1.800" fill="#fff" stroke="#bbb" strokeWidth="0.600" /><circle cx="15.500" cy="8.500" r="1.800" fill="#fff" stroke="#bbb" strokeWidth="0.600" />
        <path d="M6.500 13.500q5.500 6.500 11 0" stroke="#fff" strokeWidth="1.800" />
      </I>
      <Arrow m="ml-[10px]" />
      <I m="ml-[9px]"><path d="M1 12l7-7v4h8V5l7 7-7 7v-4H8v4z" fill="url(#lg)" stroke="#a5a5a5" /></I>
      <Arrow m="ml-[10px]" />
      <I m="ml-[9px]">
        <rect x="1.500" y="2" width="21" height="19" fill="#fff" stroke="#999" /><rect x="3.500" y="4" width="17" height="15" fill="url(#lg)" />
        <path d="M3 8h18M8 3.500v16" stroke="#fff" /><path d="M3 7h18M7 3.500v16" stroke="#aaa" strokeWidth="0.700" />
      </I>
      <Arrow m="ml-[10px]" />
      <I m="ml-[9px]">
        <path d="M3.500 2h17q3 0 3 3v9q0 3-3 3H9l-6 4.500q-2-.3 0-1.500l2-3H3.500q-3 0-3-3V5q0-3 3-3z" fill="url(#lg)" stroke="#999" />
      </I>
      <Arrow m="ml-[10px]" />
      <I m="ml-[9px]"><path d="M12 2l2.600 7.500h7.900L16 14.200l2.500 7.800L12 17.200 5.500 22 8 14.200 1.500 9.500h7.900z" fill="#d8d8d6" stroke="#8c8e8a" /><path d="M12 6l1.700 5h5l-4 3 1.500 5L12 16l-4.200 3 1.500-5-4-3h5z" fill="none" stroke="#fff" strokeWidth="0.700" /></I>
      <Arrow m="ml-[10px]" />
      <Sep m="ml-[9px]" />
      <I m="ml-[7px]">
        <path d="M6 4l9.500-2 6.500 7M6 4l3.500 10L3 19.500" stroke="#aaa" /><path d="M3 19.500l16 2L22 9" stroke="#999" strokeDasharray="3 2" />
        <g fill="#ddd" stroke="#888" strokeWidth="0.900">
          <rect x="4.500" y="2.500" width="2.600" height="2.600" /><rect x="14" y="0.800" width="2.600" height="2.600" /><rect x="21" y="7.700" width="2.600" height="2.600" /><rect x="8" y="12.700" width="2.600" height="2.600" /><rect x="1.500" y="18.300" width="2.600" height="2.600" /><rect x="18" y="20.200" width="2.600" height="2.600" />
        </g>
      </I>
      <Sep m="ml-[9px]" />
      <I m="ml-2">
        <rect x="2.500" y="2" width="19" height="20" fill="#fff" stroke="#8c8e8a" />
        <rect x="4.500" y="4" width="15" height="16" stroke="#bbb" strokeDasharray="1 1" strokeWidth="0.800" />
        <text x="5.500" y="18.500" fontSize="19" fontStyle="italic" fontWeight="700" fontFamily="Liberation Serif" fill="#4a82c6" textLength="13" lengthAdjust="spacingAndGlyphs">A</text>
      </I>
      <I m="ml-[9px]">
        <rect x="2.500" y="2.500" width="19" height="19" fill="#fff" stroke="#8c8e8a" />
        <rect x="4.500" y="8" width="8" height="8" fill="#d21a1a" stroke="#8c0a0a" />
        <path d="M13 13h4l4 6.500h-9.500z" fill="#3465a4" stroke="#1d4478" />
        <circle cx="15" cy="9" r="4.700" fill="#f7d70a" stroke="#b89c00" />
      </I>
      <Sep m="ml-2" />
      <I m="ml-[7px]">
        <path d="M7 4q1-2 3-2h12v17q0 2-2 2H7z" fill="#b5b4b2" /><path d="M5.500 5h14v16h-14z" fill="#c3c2c0" />
        <path d="M1 13h5V9.500l6 6-6 6V18H1z" fill="#e4e4e2" stroke="#aaa" />
      </I>
    </div>
  );
}

/* ---------- rulers ---------- */
function HRuler() {
  const nums = Array.from({ length: 27 }, (_, i) => i + 1);
  const at = (n: number) => 300.300 + n * 33.080 - 57;
  return (
    <svg className="h-[25px] w-full shrink-0" viewBox="0 0 1297 25" fontFamily="Open Sans, Noto Sans" fontSize="12" fill="#8b8b8b">
      <rect x="244" y="4" width="803.500" height="16" fill="#fff" />
      <rect x="169.500" y="4.500" width="74.500" height="15" fill="#f2f1ef" stroke="#a9a7a4" />
      <rect x="1047.500" y="4.500" width="103.500" height="15" fill="#f2f1ef" stroke="#a9a7a4" />
      <path d="M9.500 9.500v5h6" stroke="#858585" strokeWidth="2" fill="none" />
      <text x="177" y="15.500" textAnchor="middle">2</text>
      <text x="210" y="15.500" textAnchor="middle">1</text>
      {nums.map((n) => (
        <g key={n}>
          <text x={at(n)} y="15.500" textAnchor="middle">{n}</text>
          <path d={`M${Math.round(at(n)) + 0.500} 4v1.500M${Math.round(at(n)) + 0.500} 18v1.500`} stroke="#9a9a9a" />
        </g>
      ))}
      {[-1.500, -0.500, ...nums.map((n) => n - 0.500)].map((n) => (
        <path key={n} d={`M${Math.round(at(n)) + 0.500} 10v3`} stroke="#9a9a9a" />
      ))}
      {Array.from({ length: 15 }, (_, i) => Math.round(426.300 + i * 42.020 - 57) + 0.500).map((x) => (
        <path key={x} d={`M${x} 17v3M${x - 2.500} 20.500h5`} stroke="#8a8a8a" />
      ))}
      <path d="M334 16v4.500h6" stroke="#858585" strokeWidth="2" fill="none" />
      <path d="M270.500 4.500h10v3l-5 5-5-5z" fill="#f2f1ef" stroke="#858585" />
      <path d="M291.500 20.500h10v-3l-5-5-5 5zM1042.500 20.500h10v-3l-5-5-5 5z" fill="#f2f1ef" stroke="#858585" />
    </svg>
  );
}

function VRuler() {
  const nums = Array.from({ length: 18 }, (_, i) => i + 1);
  return (
    <svg className="ml-1 h-full w-4 shrink-0 bg-white" viewBox="0 0 16 583" fontFamily="Open Sans, Noto Sans" fontSize="12" fill="#8b8b8b">
      {nums.map((n) => {
        const y = 22.300 + (n - 1) * 33.060;
        const r = Math.round(y) + 0.500;
        return (
          <g key={n}>
            <text transform={`translate(11.500 ${y}) rotate(-90)`} textAnchor="middle">{n}</text>
            <path d={`M0 ${r}h2M14 ${r}h2M5 ${Math.round(y - 16.500) + 0.500}h4`} stroke="#9a9a9a" />
          </g>
        );
      })}
    </svg>
  );
}

/* ---------- figures ---------- */
function T({ x, y, w, s = 4.700, f = "#444", b, children }: { x: number; y: number; w: number; s?: number; f?: string; b?: boolean; children: string }) {
  return (
    <text x={x} y={y} fontSize={s} fill={f} fontWeight={b ? 700 : 400} textLength={w} lengthAdjust="spacingAndGlyphs">
      {children}
    </text>
  );
}

function Taskbar({ y, h }: { y: number; h: number }) {
  const c = y + h / 2 - 0.300;
  const k = h / 8.500;
  const apps: [number, string, string][] = [
    [605, "#1a7fd4", "#0b4f98"], [634, "#f3d27a", "#6fb3e0"], [662, "#f2f2f2", "#333"], [690, "#f0efe0", "#6ac23c"],
    [719, "#e4405f", "#39b3e6"], [748, "#0a6fc9", "#d8e9f8"], [777, "#f2c230", "#db4437"], [806, "#18a8ea", "#f5c342"],
    [834, "#b9b9b9", "#eee"], [863, "#2b579a", "#dfe6f2"], [892, "#f0751e", "#2f65b4"], [920, "#a9c4b5", "#f1e6d8"],
  ];
  return (
    <g>
      <rect x="331" y={y} width="801" height={h} fill="#27190a" />
      <rect x="361" y={y} width="199" height={h} fill="#383838" />
      <rect x="878" y={y} width="28" height={h} fill="#5a5550" />
      <path d={`M341 ${c - 1.700 * k}h4.300v${1.700 * k}h-4.300zM345.700 ${c - 1.700 * k}h4.300v${1.700 * k}h-4.300zM341 ${c + 0.200 * k}h4.300v${1.600 * k}h-4.300zM345.700 ${c + 0.200 * k}h4.300v${1.600 * k}h-4.300z`} fill="#fff" />
      <ellipse cx="371" cy={c} rx="5" ry={1.900 * k} fill="none" stroke="#eee" strokeWidth={1.100 * k} />
      <T x={380} y={c + 1.800 * k} w={75} s={5.500 * k} f="#a9a9a9">Type here to search</T>
      <path d={`M547 ${c - 1.500 * k}h3v${2 * k}h-3zM545 ${c + 1.200 * k}h7`} stroke="#aaa" strokeWidth="0.600" fill="none" />
      <path d={`M571 ${c - 1.500 * k}h8v${3 * k}h-8zM569 ${c - k}v${2 * k}M581 ${c - k}v${2 * k}`} stroke="#ddd" strokeWidth="0.700" fill="none" />
      {apps.map(([x, a, b], i) => (
        <g key={x}>
          <ellipse cx={x} cy={c} rx="6.500" ry={2.700 * k} fill={a} />
          <ellipse cx={x + 2} cy={c + 0.300 * k} rx="3" ry={1.500 * k} fill={b} />
          {i !== 2 && <rect x={x - 12} y={y + h - 1} width="24" height="1" fill="#ecd49b" />}
        </g>
      ))}
      <path d={`M992 ${c + k}l4-${2 * k} 4 ${2 * k}M1034 ${c - k}h8v${2 * k}h-4M1048 ${c - k}v${2 * k}M1054 ${c - k}v${2 * k}M1107 ${c - 1.200 * k}h9v${2 * k}h-9z`} stroke="#ccc" strokeWidth="0.800" fill="none" />
      <path d={`M1006 ${c - k}h9v${2 * k}h-9zM1021 ${c - 0.500 * k}h8v${1.600 * k}h-8z`} fill="#e4e4e4" />
      <T x={1073} y={c - 0.500 * k} w={14} s={3.400 * k} f="#d6d6d6">16:01</T>
      <T x={1063} y={c + 3.300 * k} w={34} s={3.400 * k} f="#d6d6d6">28-06-2017</T>
    </g>
  );
}

function Browser({ y, h, tab, url, tw }: { y: number; h: number; tab: string; url: string; tw: number }) {
  const k = h / 15;
  const m = y + 6 * k;
  const c = m + 4.500 * k;
  return (
    <g>
      <rect x="331" y={y} width="801" height={6.300 * k} fill="#c7c7c7" />
      <path d={`M337 ${m + 0.300}q5 0 8-${5 * k}h114q4 0 8 ${5 * k}z`} fill="#f6f6f6" />
      <rect x="331" y={m} width="801" height={9 * k} fill="#f6f6f6" />
      <ellipse cx="350" cy={y + 3.600 * k} rx="4.500" ry={1.600 * k} fill="#e23b3b" />
      <T x={358} y={y + 5.400 * k} w={tw} s={4.800 * k}>{tab}</T>
      <path d={`M451 ${y + 2 * k}l5 ${3 * k}M456 ${y + 2 * k}l-5 ${3 * k}M470 ${y + 3.400 * k}h7M473.500 ${y + 2 * k}v${3 * k}`} stroke="#666" strokeWidth="0.700" />
      <ellipse cx="343.500" cy={c} rx="9" ry={3.800 * k} fill="#fff" stroke="#bbb" strokeWidth="0.500" />
      <path d={`M339 ${c}l4-${1.700 * k}v${k}h5v${1.400 * k}h-5v${k}z`} fill="#444" />
      <rect x="357" y={m + k} width="453" height={7 * k} fill="#fff" stroke="#ddd" strokeWidth="0.400" />
      <ellipse cx="361" cy={c} rx="4" ry={1.500 * k} fill="none" stroke="#999" strokeWidth="0.600" />
      <rect x="368" y={c - 1.200 * k} width="6" height={2.600 * k} fill="#4f9f3c" />
      <T x={382} y={c + 1.700 * k} w={tw === 77 ? 135 : 170} s={4.800 * k} f="#777">{url}</T>
      <rect x="816" y={m + k} width="142" height={7 * k} fill="#fff" stroke="#ddd" strokeWidth="0.400" />
      <path d={`M797 ${c - k}h6v${2 * k}h-6z`} stroke="#777" strokeWidth="0.700" fill="none" />
      <ellipse cx="822.500" cy={c - 0.300} rx="2.500" ry={k} fill="none" stroke="#777" strokeWidth="0.600" />
      <T x={831} y={c + 1.700 * k} w={24} s={4.800 * k} f="#888">Search</T>
      <path d={`M966 ${c - 0.500 * k}h9l-7.500 ${2.200 * k} 3-${3.500 * k} 3 ${3.500 * k}zM986 ${c - k}h7v${2.300 * k}h-7z`} stroke="#444" strokeWidth="0.700" fill="none" />
      <ellipse cx="1010" cy={c} rx="4" ry={1.500 * k} fill="#1b82e8" />
      <path d={`M1026 ${c}l5.500-${1.800 * k} 5.500 ${1.800 * k}h-2v${1.500 * k}h-7v-${1.500 * k}z`} fill="#444" />
      <path d={`M1048 ${c - 1.500 * k}h9v${1.500 * k}q-4.500 ${2.500 * k} -9 0z`} fill="#555" />
      <rect x="1069" y={c - 1.300 * k} width="5" height={2.500 * k} fill="#7ab5e8" /><rect x="1073" y={c - k} width="5" height={2.500 * k} fill="#e3c63a" />
      <rect x="1090" y={c - 1.500 * k} width="10" height={3 * k} fill="#46505c" />
      <rect x="1115" y={c - 1.300 * k} width="9" height={2.600 * k} fill="#666" />
      <path d={`M1061 ${y + 2.800 * k}h6M1088 ${y + 2 * k}h5v${2 * k}h-5zM1115 ${y + 2 * k}l6 ${2 * k}M1121 ${y + 2 * k}l-6 ${2 * k}`} stroke="#555" strokeWidth="0.800" fill="none" />
    </g>
  );
}

function FigureOne() {
  const fields: [number, number, string, number, string, boolean][] = [
    [351, 134, "Select Reports Category", 78, "Select", true],
    [503, 134, "Select Reports", 47, "Select", false],
    [805, 91, "Select State", 39, "ALL", false],
    [913, 90, "Select District", 45, "ALL", false],
    [1021, 90, "Select Block", 40, "ALL", false],
  ];
  return (
    <svg className="ml-[106px] block h-[166px] w-[801px]" viewBox="331 268 801 166" fontFamily="Open Sans, Noto Sans">
      <rect x="331" y="268" width="801" height="166" fill="#fff" />
      <Browser y={268} h={15} tab="NMS Reporting - Reports" url="https://rchivrreports.in/app/#!/reports" tw={77} />
      <rect x="331" y="283" width="801" height="20" fill="url(#ban)" />
      <rect x="455" y="283" width="677" height="20" fill="url(#dots)" />
      <rect x="331" y="302.500" width="801" height="9.500" fill="#21b4d8" />
      <path d="M341 288q3-2 10-2t10 2l-3 4h2l1 4h1l-2 3h-18l-2-3h1l1-4h2z" fill="#2e6777" opacity="0.850" />
      <path d="M344 289h14M346 291.500h10M343 297h17" stroke="#1f4652" strokeWidth="0.900" />
      <T x={377} y={292.600} w={185} s={4.900} b f="#0b4250">Mobile Academy &amp; Kilkari Management</T>
      <T x={377} y={297.600} w={102} s={4.900} b f="#0b4250">&amp; information System</T>
      <T x={370} y={309.500} w={24} f="#eafcff" b>Reports</T>
      <T x={1035} y={295.600} w={73} s={4.900} f="#effcff" b>Hello NationalNHM</T>
      <rect x="921" y="303" width="44" height="9" fill="#2566b4" />
      <T x={931} y={309.500} w={24} f="#dbe8f6" b>Reports</T>
      <T x={974} y={309.500} w={57} f="#15596c" b>User Management</T>
      <T x={1050} y={309.500} w={32} f="#15596c" b>My Profile</T>
      <T x={1101} y={309.500} w={21} f="#15596c" b>Logout</T>
      <ellipse cx="1004" cy="307.700" rx="39.500" ry="5.300" fill="none" stroke="#e0242c" strokeWidth="1.300" />
      {fields.map(([x, w, label, lw, v, dark]) => (
        <g key={x}>
          <T x={x + 0.500} y={323} w={lw} b s={4.400} f="#444">{label}</T>
          <rect x={x + 0.500} y="325" width={w - 1} height="5.800" fill="#fff" stroke="#ccc" strokeWidth="0.500" />
          <T x={v === "ALL" ? x + 12 : x + 7} y={329.500} w={v === "ALL" ? 11 : 19} s={4} f={dark ? "#333" : "#888"}>{v}</T>
          <path d={`M${x + w - 11} 327.200h4l-2 1.500z`} fill="#555" />
        </g>
      ))}
      <T x={654} y={323} w={43} b s={4.400} f="#444">Select Month</T>
      <rect x="653.500" y="325" width="115" height="5.800" fill="#ededed" stroke="#ccc" strokeWidth="0.500" />
      <rect x="768.500" y="325" width="19" height="5.800" fill="#fff" stroke="#ccc" strokeWidth="0.500" />
      <rect x="774" y="326.500" width="6" height="2.800" fill="#666" />
      <rect x="351" y="336.500" width="35.500" height="6.500" fill="#2367b3" />
      <T x={358} y={341.300} w={22} f="#b9d2ec" s={4.500}>Submit</T>
      <rect x="388" y="336.500" width="31" height="6.500" fill="#2e6596" />
      <T x={395} y={341.300} w={18} f="#d9e4ee" s={4.500}>Reset</T>
      <rect x="331" y="418" width="801" height="7.500" fill="#b5b5b5" />
      <T x={581} y={423.300} w={301} s={4.900} f="#555">2017 all rights reserved - Mobile Academy &amp; Kilkari Management and information system</T>
      <Taskbar y={425.500} h={8.500} />
    </svg>
  );
}

function FigureTwo() {
  const rows: [number, string, number, string, string][] = [
    [566.300, "NationalNHM", 42, "satendra@beehyv.com", ""],
    [570.300, "JharkhandNHM", 49, "satendra@beehyv.com", "JHARKHAND"],
    [574.200, "DelhiNHM", 32, "Manoj.kashyap@in.bbcmediaaction.org", "DELHI"],
    [578.100, "UttarPradeshNHM", 56, "pri.mendiratta@in.bbcmediaaction.org", "UTTAR PRADESH"],
    [581.900, "MadhyaPradeshNHM", 66, "pri.mendiratta@in.bbcmediaaction.org", "MADHYA"],
    [587.800, "RajasthanNHM", 47, "satendra@beehyv.com", "RAJASTHAN"],
    [591.700, "UttarakhandNHM", 54, "Manoj.kashyap@in.bbcmediaaction.org", "UTTARAKHAND"],
    [595.500, "OdishaNHM", 38, "pri.mendiratta@in.bbcmediaaction.org", "ODISHA"],
    [599.300, "HimachalPradeshNHM", 71, "satendra@beehyv.com", "HIMACHAL"],
    [605.300, "HaryanaNHM", 42, "pri.mendiratta@in.bbcmediaaction.org", "HARYANA"],
  ];
  const cols: [number, string, number][] = [
    [345, "ID", 7], [367, "Name", 20], [459, "Username", 33], [541, "Phone No.", 31], [608, "Email ID", 27],
    [742, "Access Type", 41], [810, "Access Level", 43], [878, "State", 18], [947, "District", 24], [1014, "Block", 19], [1083, "Edit", 12],
  ];
  const g = "#6b6a78";
  return (
    <svg className="ml-[106px] block h-[88px] w-[796px]" viewBox="331 535 796 88" fontFamily="Open Sans, Noto Sans">
      <rect x="331" y="535" width="796" height="88" fill="#fff" />
      <Browser y={535} h={7.500} tab="NMS Reporting - User Man" url="https://rchivrreports.in/app/#!/userManagement" tw={85} />
      <rect x="331" y="542" width="796" height="1.800" fill="#c5e7ee" />
      <T x={352} y={551} w={99} s={5} f="#333">User Management</T>
      <rect x="757.500" y="548" width="115" height="3.500" fill="#fff" stroke="#bbb" strokeWidth="0.400" />
      <T x={764} y={550.800} w={22} s={2.600} f="#999">Search</T>
      <rect x="875" y="547.800" width="115" height="4" fill="#2367b3" />
      <T x={905} y={550.900} w={54} s={2.900} f="#b5cfea" b>Update Bulk User</T>
      <rect x="992" y="547.800" width="115.500" height="4" fill="#2367b3" />
      <T x={1024} y={550.900} w={51} s={2.900} f="#b5cfea" b>Create New User</T>
      <rect x="1056.500" y="555.800" width="51.500" height="3.300" fill="#2367b3" />
      <T x={1063} y={558.500} w={39} s={2.600} f="#b5cfea" b>Reset Filters</T>
      <rect x="340" y="559.300" width="768" height="47" fill="#e8e6f8" />
      <rect x="340" y="559.300" width="768" height="4.200" fill="#2368b5" />
      {cols.map(([x, t, w]) => (
        <g key={x}>
          <T x={x} y={562.400} w={w} s={2.800} f="#e3edf8" b>{t}</T>
          {x > 700 && x < 1080 && <rect x={x + 53} y="561" width="5" height="0.700" fill="#b9d0ea" />}
        </g>
      ))}
      {rows.map(([y, name, w, mail, state], i) => (
        <g key={y}>
          <T x={346} y={y} w={i === 9 ? 6 : 3} s={2.800} f={g}>{String(i + 1)}</T>
          <T x={368} y={y} w={w} s={2.800} f={g}>{name}</T>
          <T x={460} y={y} w={w} s={2.800} f={g}>{name}</T>
          <T x={541} y={y} w={39} s={2.800} f={g}>9880200112</T>
          <T x={609} y={y} w={mail.length > 20 ? (mail[0] === "M" ? 123 : 119) : 68} s={2.800} f={g}>{mail}</T>
          <T x={742} y={y} w={22} s={2.800} f={g}>ADMIN</T>
          <T x={810} y={y} w={i === 0 ? 32 : 20} s={2.800} f={g}>{i === 0 ? "NATIONAL" : "STATE"}</T>
          {state && <T x={878} y={y} w={Math.round(state.length * 4.200)} s={2.800} f={g}>{state}</T>}
          {(i === 4 || i === 8) && <T x={878} y={y + 2.300} w={30} s={2.400} f={g}>PRADESH</T>}
          {i > 0 && <T x={1082} y={y} w={12} s={2.800} f="#6a5a5a" b>Edit</T>}
        </g>
      ))}
      <path d="M362.500 559.300v47M454.500 559.300v47M535.500 559.300v47M603.500 559.300v47M736.500 559.300v47M804.500 559.300v47M872.500 559.300v47M941.500 559.300v47M1009.500 559.300v47M1077.500 559.300v47" stroke="#cfd2dc" strokeWidth="0.700" />
      <rect x="1117" y="543.800" width="10" height="73" fill="#f1f1f1" />
      <rect x="1117" y="557" width="10" height="55" fill="#cdcdcd" />
      {[901, 919, 936.500, 956, 976, 994].map((x, i) => (
        <g key={x}>
          <rect x={x} y="611" width={i === 2 ? 19 : 18} height="3.700" fill={i === 2 ? "#337ab7" : "#fff"} stroke="#ccc" strokeWidth="0.400" />
          <rect x={x + 8} y="612.500" width="3" height="0.800" fill={i === 2 ? "#fff" : "#8fb6d6"} />
        </g>
      ))}
      <rect x="331" y="616.700" width="796" height="0.800" fill="#9bb0b0" />
      <Taskbar y={617.400} h={5.600} />
    </svg>
  );
}

function Logo() {
  return (
    <svg className="ml-[75px] block h-[49px] w-[147px] shrink-0 border-r border-b border-l border-[#bdbdbd]" viewBox="301 124 145 48">
      <g fill="#86bd22">
        <circle cx="325" cy="123.500" r="3" /><circle cx="333" cy="121.500" r="3.500" /><circle cx="318" cy="128" r="3" />
        <circle cx="313.500" cy="136.500" r="3.800" /><circle cx="316" cy="146" r="5" />
      </g>
      <g fill="#3659a5">
        <circle cx="428" cy="132" r="4.800" /><circle cx="434.500" cy="141.500" r="3" /><circle cx="430.500" cy="149.500" r="3.500" />
        <circle cx="423.500" cy="156.500" r="2.800" /><circle cx="416.500" cy="159.500" r="2" />
      </g>
      <text x="325" y="151.500" fontFamily="Open Sans" fontWeight="700" fontSize="27" fill="#3b62ab" stroke="#3b62ab" strokeWidth="0.500" textLength="47" lengthAdjust="spacingAndGlyphs">Bee</text>
      <text x="373.500" y="151.500" fontFamily="Open Sans" fontWeight="700" fontSize="27" fill="#58a836" textLength="47.500" lengthAdjust="spacingAndGlyphs">Hyv</text>
    </svg>
  );
}

const Spell = ({ children }: { children: string }) => (
  <span className="relative">
    {children}
    <svg className="absolute bottom-[-1px] left-0 h-[3px] w-full" preserveAspectRatio="none">
      <rect width="100%" height="3" fill="url(#zig)" />
    </svg>
  </span>
);

function DocPage() {
  return (
    <main className={"relative ml-[148px] h-full w-[984px] shrink-0 bg-white shadow-[0_0_3px_2px_#b5b3b0] " + SERIF}>
      <Logo />
      <div className="absolute top-[38px] left-[63px] h-[11px] w-[12px] border-r border-b border-[#c2c2c2]" />
      <div className="absolute top-[38px] left-[878px] h-[11px] w-[12px] border-b border-l border-[#c2c2c2]" />
      <div className="absolute top-[569px] left-[63px] h-[12px] w-[12px] border-t border-r border-[#c2c2c2]" />
      <div className="absolute top-[569px] left-[878px] h-px w-[12px] bg-[#c2c2c2]" />

      <h1 className="mt-[28px] ml-[100px] flex h-5 text-[16.300px] leading-5 font-bold text-[#2e74b5]">
        <span className="w-[28px]">4</span>
        <Fit w={128.500}>User Management</Fit>
      </h1>
      <p className="mt-[18px] ml-[107px] flex h-4 items-center text-[12.900px] leading-4 text-black">
        <Fit w={102}>An <Spell>Admin</Spell> user can </Fit>
        <span className="-ml-[1px] flex h-4 items-center border border-[#ea7440] bg-[#f9d9cc] pl-px text-[#3c1a14]">
          <Fit w={228}>access User Management by click on the tab</Fit>
        </span>
        <span className="h-[15px] w-px bg-black" />
        <Fit w={193.500} className="ml-px">for the same as shown in Figure 1.20:</Fit>
      </p>
      <div className="mt-[13px]"><FigureOne /></div>
      <p className="mt-[24px] ml-[469px] h-3 text-[10.500px] leading-3 text-[#3f5f8c]"><Fit w={49}>Figure 1.20</Fit></p>
      <p className="mt-[36px] ml-[107px] h-4 text-[12.900px] leading-4 text-black">
        <Fit w={686}>Clicking on ‘User Management’ will display the list of users as per the Access Level of the logged-in <Spell>Admin</Spell>. Figure 1.21 is a sample,</Fit>
      </p>
      <div className="mt-[13px]"><FigureTwo /></div>
      <p className="mt-[24px] ml-[469px] h-3 text-[10.500px] leading-3 text-[#2f74b5]"><Fit w={49}>Figure 1.21</Fit></p>
      <p className="mt-[35px] ml-[785px] flex h-[18px] items-center font-['DejaVu_Sans',sans-serif] text-[13.500px] leading-[16px] text-black">
        <Fit w={34}>Page </Fit>
        <Fit w={20} className="bg-[#bdbdbd] font-bold">68</Fit>
        <Fit w={20}> of </Fit>
        <Fit w={20} className="bg-[#bdbdbd] font-bold">76</Fit>
      </p>
    </main>
  );
}

/* ---------- scrollbar ---------- */
const Round = ({ children }: { children: ReactNode }) => (
  <svg className="h-[13px] w-[12px] shrink-0" viewBox="0 0 12 13">
    <circle cx="6" cy="6.500" r="5.200" fill="#fbfbfa" stroke="#a8a6a3" />
    {children}
  </svg>
);
function ScrollColumn() {
  return (
    <div className="flex w-[13px] shrink-0 flex-col items-center pt-px">
      <div className="flex h-[568px] w-[12px] flex-col rounded-[6px] border border-[#a8a6a3] bg-[#f6f5f4]">
        <svg className="h-[13px] w-[10px] shrink-0" viewBox="0 0 10 13"><path d="M2.500 8h5L5 5.200z" fill="#555" /></svg>
        <div className="flex flex-1 flex-col rounded-[5px] bg-gradient-to-r from-[#cfcdca] to-[#dedcda] pt-[454px]">
          <div className="-mx-px flex h-[31px] flex-col items-center justify-center gap-[3px] rounded-[6px] border border-[#9a9895] bg-gradient-to-r from-white to-[#ededeb]">
            <div className="h-px w-[4px] bg-[#999]" /><div className="h-px w-[4px] bg-[#999]" /><div className="h-px w-[4px] bg-[#999]" />
          </div>
        </div>
        <svg className="h-[12px] w-[10px] shrink-0" viewBox="0 0 10 12"><path d="M2.500 4h5L5 7z" fill="#555" /></svg>
      </div>
      <Round><path d="M4 5.500h4L6 3.500zM4 7h4M6 5v3.500M4 9h4" fill="#444" stroke="#444" strokeWidth="0.800" /></Round>
      <Round><path d="M3.500 9.500q0-5.500 5.500-6v6z" fill="#2f6391" /></Round>
      <Round><path d="M4 7.500h4L6 9.500zM4 6h4M6 8V4.500M4 4h4" fill="#444" stroke="#444" strokeWidth="0.800" /></Round>
    </div>
  );
}

/* ---------- status ---------- */
const VSep = ({ m }: { m: string }) => <div className={"h-4 w-px shrink-0 bg-[#cfcdca] " + m} />;
function StatusBar() {
  return (
    <footer className={"flex h-[21px] shrink-0 items-center text-[12px] leading-4 text-[#4a4a4a] " + UI}>
      <div className="w-[146px] shrink-0 pl-[10px]"><Fit w={61}>Page 68 / 76</Fit></div>
      <VSep m="" />
      <div className="w-[233px] shrink-0 pl-[8px]"><Fit w={152}>8 words, 42 characters selected</Fit></div>
      <VSep m="" />
      <div className="w-[152px] shrink-0 pl-[8px]"><Fit w={64}>Default Style</Fit></div>
      <VSep m="" />
      <div className="flex w-[157px] shrink-0 pl-[47px]"><Fit w={65}>English (USA)</Fit></div>
      <VSep m="" />
      <VSep m="ml-[67px]" />
      <svg className="ml-[9px] h-[12px] w-[14px]" viewBox="0 0 14 12"><rect x="0" y="4" width="9" height="6" fill="#8c8c8c" /><path d="M11.500 1.500v9M10 1.500h3M10 10.500h3" stroke="#777" /></svg>
      <VSep m="ml-[5px]" />
      <svg className="ml-[8px] h-[15px] w-[15px]" viewBox="0 0 15 15" fill="none">
        <path d="M1 1h8l5 5v8H1z" fill="#fff" stroke="#8a8ae0" /><path d="M9 1v5h5M7.500 8.500h5M7.500 10.500h5M7.500 12.500h4" stroke="#8a8ae0" />
        <path d="M3.300 1.500h3v7h-3zM3.800 11h2.200v3H3.800z" fill="#e01515" />
      </svg>
      <VSep m="ml-[5px]" />
      <VSep m="ml-[227px]" />
      <svg className="ml-[11px] h-[12px] w-[56px]" viewBox="0 0 56 12" fill="none" strokeWidth="1.200">
        <path d="M1.500 1h4.500l2.500 3v7.300h-7zM5.500 1v3.500h3" stroke="#888" />
        <path d="M15.500 1h4.500l2.500 3v7.300h-7zM19.500 1v3.500h3M25.500 1h4l2.500 3v7.300h-6.500zM29 1v3.500h3" stroke="#555" />
        <path d="M47 1v10.300h-7V4l2.500-3zM43 1v3.500h-3M47 1h4.500L54 4v7.300h-7M51 1v3.500h3" stroke="#888" />
      </svg>
      <VSep m="ml-[8px]" />
      <svg className="ml-[10px] h-[12px] w-[126px]" viewBox="0 0 126 12">
        <path d="M0 6h8M117 6h8M121 2v8" stroke="#888" strokeWidth="2" />
        <path d="M14 6h97M39 1v10M50 1v10" stroke="#aaa8a5" strokeWidth="2" />
        <circle cx="62" cy="6" r="3.800" fill="#fff" stroke="#888" strokeWidth="1.200" />
      </svg>
      <VSep m="ml-[6px]" />
      <Fit w={27} className="ml-[7px]">100%</Fit>
    </footer>
  );
}

export default function App() {
  return (
    <div className="flex h-[768px] w-[1366px] flex-col overflow-hidden bg-[#f2f1ef]">
      <Defs />
      <Panel />
      <div className="flex min-h-0 flex-1">
        <Launcher />
        <div className="flex min-w-0 flex-1 flex-col">
          <StandardBar />
          <FormatBar />
          <div className="flex h-[608px] shrink-0">
            <div className="flex min-w-0 flex-1 flex-col">
              <HRuler />
              <div className="flex h-[583px] shrink-0 overflow-hidden">
                <VRuler />
                <DocPage />
              </div>
            </div>
            <ScrollColumn />
          </div>
          <DrawingBar />
          <StatusBar />
        </div>
      </div>
    </div>
  );
}
